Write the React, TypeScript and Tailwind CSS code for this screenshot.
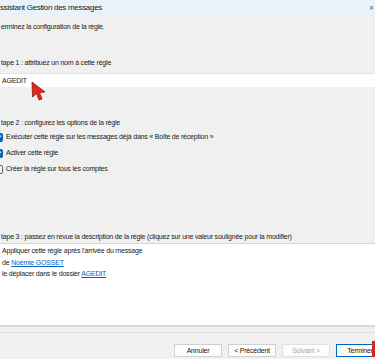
const Check = ({ checked }: { checked: boolean }) => (
  <div
    className={
      checked
        ? "-ml-[6px] mr-[3px] flex h-[9px] w-[9px] shrink-0 items-center justify-center rounded-[2px] bg-[#0067c0]"
        : "-ml-[6px] mr-[3px] h-[9px] w-[9px] shrink-0 rounded-[2px] border border-[#5a5a5a] bg-white"
    }
  >
    {checked && (
      <svg width="7" height="7" viewBox="0 0 8 8">
        <path d="M1.2 4.2 3.1 6 6.8 1.8" fill="none" stroke="white" strokeWidth="1.2" />
      </svg>
    )}
  </div>
);

const options = [
  { label: "Exécuter cette règle sur les messages déjà dans « Boîte de réception »", checked: true },
  { label: "Activer cette règle", checked: true },
  { label: "Créer la règle sur tous les comptes", checked: false },
];

const buttons = [
  { label: "Annuler", cls: "border-[#d0d0d0] text-[#1a1a1a]" },
  { label: "< Précédent", cls: "border-[#d0d0d0] text-[#1a1a1a]" },
  { label: "Suivant >", cls: "border-[#e0e0e0] text-[#a8a8a8]" },
  { label: "Terminer", cls: "border-[#0067c0] text-[#1a1a1a]" },
];

export default function App() {
  return (
    <div className="relative flex h-[359px] w-[375px] flex-col overflow-hidden bg-[#f0f0f0] font-['Liberation_Sans',Arial,sans-serif] text-[7px] leading-[10px] tracking-[-0.2px] text-[#1a1a1a]">
      <div className="flex h-[16px] shrink-0 items-center justify-between bg-[#eaf2f9] text-[8px] tracking-[-0.3px]">
        <span>ssistant Gestion des messages</span>
        <span className="pr-[1px] text-[6px] text-[#555]">✕</span>
      </div>

      <div className="mt-[6px] pl-[1px]">erminez la configuration de la règle.</div>

      <div className="mt-[26px] pl-[1px]">tape 1 : attribuez un nom à cette règle</div>
      <div className="mt-[5px] flex h-[14px] items-center border-t border-[#e3e3e3] bg-white pl-[2px]">
        AGEDIT
      </div>

      <div className="mt-[31px] pl-[1px]">tape 2 : configurez les options de la règle</div>
      <div className="mt-[1px] flex flex-col">
        {options.map((o, i) => (
          <div key={i} className="flex h-[16px] items-center">
            <Check checked={o.checked} />
            <span>{o.label}</span>
          </div>
        ))}
      </div>

      <div className="mt-[55px] pl-[1px]">
        tape 3 : passez en revue la description de la règle (cliquez sur une valeur soulignée pour la modifier)
      </div>
      <div className="mt-[1px] flex h-[82px] flex-col border-t border-[#d6d6d6] bg-white pl-[2px] pt-[1px] leading-[11.5px]">
        <div>Appliquer cette règle après l'arrivée du message</div>
        <div>
          de <span className="text-[#0563c1] underline">Noémie GOSSET</span>
        </div>
        <div>
          le déplacer dans le dossier <span className="text-[#0563c1] underline">AGEDIT</span>
        </div>
      </div>

      <div className="h-[8px] border-t-2 border-[#d9d9d9] border-b border-b-[#e2e2e2]" />

      <div className="mt-[11px] flex gap-[6px] pl-[174px]">
        {buttons.map((b) => (
          <div
            key={b.label}
            className={`flex h-[13px] w-[48px] shrink-0 items-center justify-center border bg-[#fdfdfd] ${b.cls}`}
          >
            {b.label}
          </div>
        ))}
      </div>

      <svg className="absolute left-[31px] top-[81px]" width="16" height="20" viewBox="0 0 16 20">
        <path d="M1 1 L14 11 L8.5 11.5 L11 18 L8 19 L5.5 12.5 L1.5 16 Z" fill="#e8261c" stroke="#8a1a10" strokeWidth="0.8" />
      </svg>
      <div className="absolute left-[372px] top-[341px] h-[16px] w-[3px] bg-[#d8261c]" />
    </div>
  );
}
